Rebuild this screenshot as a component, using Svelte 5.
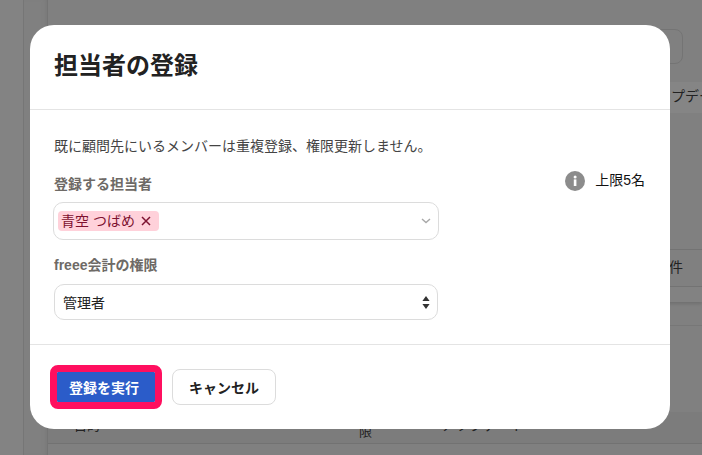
<script>
	let tags = ['青空 つばめ'];
</script>

<div class="page">
	<div class="rail"></div>
	<div class="side"></div>
	<main>
		<div class="toolbar"><div class="search"></div></div>
		<div class="tablehead"><span>アップデート</span></div>
		<div class="spacer"></div>
		<div class="count"><span>件</span></div>
		<div class="strip"></div>
		<div class="rest"></div>
		<div class="foot">
			<span class="c1">目的</span>
			<span class="c2">権限</span>
			<span class="c3">アップデート</span>
		</div>
		<div class="last"></div>
	</main>
</div>

<div class="modal">
	<header><h1>担当者の登録</h1></header>
	<section>
		<p>既に顧問先にいるメンバーは重複登録、権限更新しません。</p>
		<div class="row">
			<div class="fields">
				<div class="label first">登録する担当者</div>
				<div class="tagselect">
					{#each tags as tag}
						<span class="tag">
							{tag}
							<svg class="x" width="10" height="10" viewBox="0 0 10 10">
								<path d="M1 1l8 8M9 1l-8 8" fill="none" stroke="#7d1230" stroke-width="1.5" />
							</svg>
						</span>
					{/each}
					<svg class="chev" width="10" height="6" viewBox="0 0 10 6">
						<path d="M1 1l4 3.6L9 1" fill="none" stroke="#a8a8a8" stroke-width="1.4" />
					</svg>
				</div>
				<div class="label second">freee会計の権限</div>
				<div class="select">
					<span>管理者</span>
					<svg width="8" height="13" viewBox="0 0 8 13">
						<path d="M4 0l3.6 5H.4zM4 13L.4 8h7.2z" fill="#333" />
					</svg>
				</div>
			</div>
			<div class="limit">
				<svg width="20" height="20" viewBox="0 0 20 20">
					<circle cx="10" cy="10" r="10" fill="#8c8c8c" />
					<rect x="8.8" y="8.4" width="2.6" height="6.6" fill="#fff" />
					<circle cx="10.1" cy="5.9" r="1.5" fill="#fff" />
				</svg>
				<span>上限5名</span>
			</div>
		</div>
	</section>
	<footer>
		<button class="primary">登録を実行</button>
		<button class="cancel">キャンセル</button>
	</footer>
</div>

<style>
	:global(body) {
		margin: 0;
		overflow: hidden;
		background: #808080;
		font-family: 'Liberation Sans', 'Noto Sans CJK JP', sans-serif;
	}

	.page {
		display: flex;
		width: 702px;
		height: 455px;
		overflow: hidden;
		background: #808080;
		color: #222;
		font-size: 14px;
	}
	.rail {
		flex: none;
		width: 23px;
		background: #838383;
		border-right: 1px solid #767676;
	}
	.side {
		flex: none;
		width: 23px;
		background: #808080;
		border-right: 1px solid #747474;
		box-shadow: inset -4px 0 4px -3px #777;
	}
	main {
		flex: 1;
		min-width: 0;
		display: flex;
		flex-direction: column;
	}
	.toolbar {
		flex: none;
		height: 82px;
		padding-top: 29px;
		box-sizing: border-box;
		display: flex;
		justify-content: flex-end;
		padding-right: 19px;
	}
	.search {
		width: 200px;
		height: 35px;
		box-sizing: border-box;
		border: 1px solid #747474;
		border-radius: 8px;
	}
	.tablehead {
		flex: none;
		height: 31px;
		background: #858585;
		line-height: 29px;
		white-space: nowrap;
		padding-left: 595px;
		font-size: 14px;
	}
	.spacer {
		flex: none;
		height: 137px;
		border-bottom: 1px solid #737373;
		box-sizing: border-box;
	}
	.count {
		flex: none;
		height: 37px;
		border-bottom: 1px solid #737373;
		box-sizing: border-box;
		line-height: 34px;
		padding-left: 621px;
		font-size: 14px;
	}
	.strip {
		flex: none;
		height: 15px;
		background: #828282;
		box-shadow: 0 2px 3px #707070;
	}
	.rest {
		flex: none;
		height: 23px;
		border-bottom: 1px solid #777;
	}
	.rest + .foot {
		margin-top: 86px;
	}
	.foot {
		flex: none;
		height: 32px;
		background: #7c7c7c;
		border-bottom: 1px solid #727272;
		display: flex;
		box-sizing: border-box;
		font-size: 13px;
		line-height: 27px;
		white-space: nowrap;
	}
	.c1 {
		margin-left: 26px;
	}
	.c2 {
		margin-left: 259px;
		margin-top: -10px;
		width: 14px;
		white-space: normal;
		line-height: 20px;
	}
	.c3 {
		margin-left: 68px;
		font-size: 14px;
	}
	.last {
		flex: 1;
		background: #808080;
	}

	.modal {
		position: absolute;
		left: 30px;
		top: 25px;
		width: 640px;
		height: 404px;
		background: #fff;
		border-radius: 24px;
		display: flex;
		flex-direction: column;
		color: #222;
	}
	header {
		height: 85px;
		box-sizing: border-box;
		border-bottom: 1px solid #e4e4e4;
		padding: 24px 24px 0;
	}
	h1 {
		margin: 0;
		font-size: 24px;
		line-height: 34px;
		font-weight: 700;
		color: #222;
	}
	section {
		height: 235px;
		box-sizing: border-box;
		border-bottom: 1px solid #e4e4e4;
		padding: 26px 24px 0;
	}
	p {
		margin: 0;
		font-size: 14px;
		line-height: 20px;
		color: #444;
	}
	.row {
		display: flex;
		justify-content: space-between;
		align-items: flex-start;
	}
	.fields {
		width: 384px;
	}
	.label {
		font-size: 14px;
		font-weight: 700;
		line-height: 20px;
		color: #6e6a66;
	}
	.first {
		margin-top: 18px;
	}
	.second {
		margin-top: 15px;
	}
	.tagselect {
		margin: 8px -1px 0;
		height: 38px;
		box-sizing: border-box;
		border: 1px solid #dcdcdc;
		border-radius: 10px;
		display: flex;
		align-items: center;
		padding: 0 7px 0 4px;
	}
	.tag {
		height: 20px;
		width: 101px;
		box-sizing: border-box;
		padding-left: 3px;
		background: #ffd1da;
		border-radius: 4px;
		color: #7d1230;
		font-size: 14px;
		line-height: 20px;
		white-space: nowrap;
		display: flex;
		align-items: center;
	}
	.x {
		margin-left: 6px;
	}
	.chev {
		margin-left: auto;
	}
	.select {
		margin-top: 9px;
		height: 36px;
		box-sizing: border-box;
		border: 1px solid #dcdcdc;
		border-radius: 10px;
		display: flex;
		align-items: center;
		justify-content: space-between;
		padding: 0 7px 0 8px;
		font-size: 14px;
		color: #222;
	}
	.limit {
		display: flex;
		align-items: center;
		gap: 10px;
		margin-top: 15px;
		margin-right: 1px;
		font-size: 14px;
		color: #111;
	}
	.limit span {
		margin-top: -5px;
	}
	footer {
		flex: 1;
		display: flex;
		align-items: center;
		gap: 17px;
		padding-left: 27px;
		box-sizing: border-box;
	}
	button {
		font-family: inherit;
		font-size: 14px;
		font-weight: 700;
		padding: 0;
	}
	.primary {
		width: 98px;
		height: 30px;
		border: 0;
		border-radius: 1px;
		background: #2b5cc9;
		color: #fff;
		outline: 7px solid #ff0f5f;
		outline-offset: 0;
		padding-right: 4px;
	}
	.cancel {
		width: 104px;
		height: 36px;
		background: #fff;
		border: 1px solid #dcdcdc;
		border-radius: 8px;
		color: #222;
	}
</style>
